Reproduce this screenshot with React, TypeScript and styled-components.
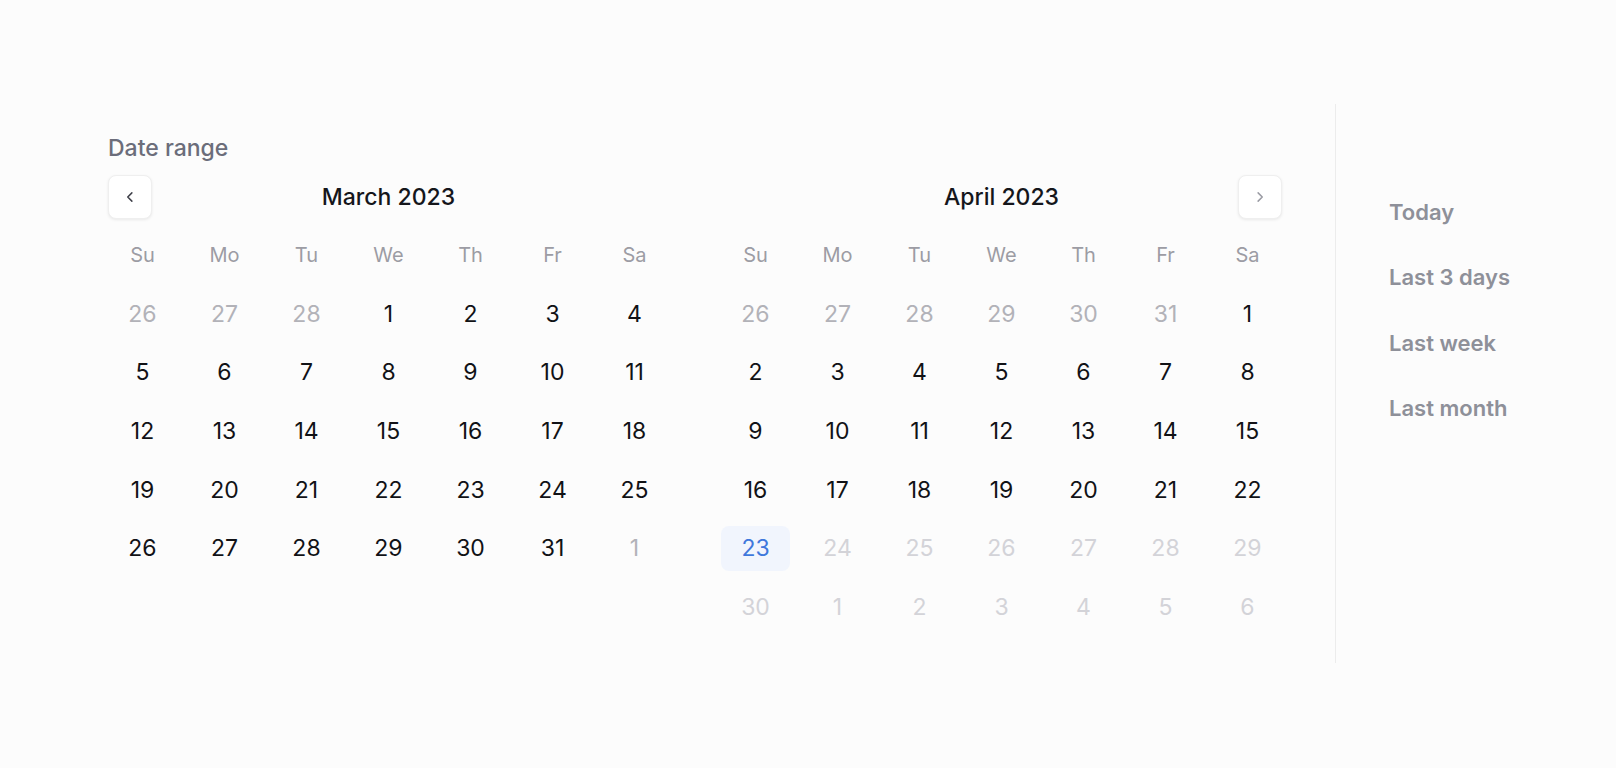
import React from "react";
import styled, { createGlobalStyle } from "styled-components";

const GlobalStyle = createGlobalStyle`
  html, body {
    margin: 0;
    padding: 0;
    background: #fcfcfc;
  }
  body {
    font-family: Inter, "Noto Sans", "Liberation Sans", sans-serif;
    -webkit-font-smoothing: antialiased;
  }
`;

const Page = styled.div`
  min-height: 100vh;
  box-sizing: border-box;
  padding: 104px 0 0 108px;
  background: #fcfcfc;
`;

const Picker = styled.div`
  display: flex;
  height: 559px;
`;

const RangeSection = styled.section`
  display: flex;
  flex-direction: column;
  padding-top: 28px;
`;

const Label = styled.div`
  font-size: 23px;
  line-height: 32px;
  font-weight: 500;
  color: #6b6d7a;
`;

const Months = styled.div`
  display: flex;
  gap: 52px;
  margin-top: 11px;
`;

const Month = styled.div`
  width: 561px;
  display: flex;
  flex-direction: column;
`;

const MonthHeader = styled.div`
  display: grid;
  grid-template-columns: 44px 1fr 44px;
  align-items: center;
  height: 44px;
`;

const MonthTitle = styled.div`
  text-align: center;
  font-size: 23px;
  line-height: 32px;
  font-weight: 500;
  color: #15161b;
`;

const NavButton = styled.button<{ $muted?: boolean }>`
  width: 44px;
  height: 44px;
  box-sizing: border-box;
  display: flex;
  align-items: center;
  justify-content: center;
  padding: 0;
  border: 1px solid #efefef;
  border-radius: 8px;
  background: #ffffff;
  box-shadow: 0 1px 3px rgba(0, 0, 0, 0.08);
  color: ${(p) => (p.$muted ? "#9a9ba3" : "#3f4049")};
  cursor: pointer;
`;

const Grid = styled.div`
  display: grid;
  grid-template-columns: repeat(7, 69px);
  grid-auto-rows: 45px;
  column-gap: 13px;
  row-gap: 13.7px;
  margin-top: 13.5px;
`;

const Weekday = styled.div`
  display: flex;
  align-items: center;
  justify-content: center;
  font-size: 20px;
  font-weight: 400;
  color: #9c9ca4;
`;

type DayKind = "current" | "outside" | "disabled" | "today";

const dayColors: Record<DayKind, string> = {
  current: "#111216",
  outside: "#b2b2b8",
  disabled: "#d3d3d8",
  today: "#3f78dc",
};

const Day = styled.div<{ $kind: DayKind }>`
  display: flex;
  align-items: center;
  justify-content: center;
  font-size: 23px;
  font-weight: 400;
  border-radius: 8px;
  color: ${(p) => dayColors[p.$kind]};
  background: ${(p) => (p.$kind === "today" ? "#f1f5fd" : "transparent")};
`;

const Divider = styled.div`
  width: 1px;
  margin: 0 53px;
  background: #ececec;
`;

const Presets = styled.nav`
  display: flex;
  flex-direction: column;
  gap: 33.3px;
  padding-top: 92px;
`;

const Preset = styled.button`
  display: block;
  padding: 0;
  border: none;
  background: none;
  text-align: left;
  font-family: inherit;
  font-size: 22px;
  line-height: 32px;
  font-weight: 600;
  color: #8e9099;
  cursor: pointer;
  white-space: nowrap;
`;

const Chevron = ({ dir }: { dir: "left" | "right" }) => (
  <svg width="18" height="18" viewBox="0 0 24 24" fill="none" stroke="currentColor" strokeWidth="2" strokeLinecap="round" strokeLinejoin="round">
    <path d={dir === "left" ? "M14.5 17.5 9 12l5.5-5.5" : "M9.5 17.5 15 12 9.5 6.5"} />
  </svg>
);

const WEEKDAYS = ["Su", "Mo", "Tu", "We", "Th", "Fr", "Sa"];

type Cell = { n: number; kind: DayKind };

const range = (from: number, to: number, kind: DayKind): Cell[] =>
  Array.from({ length: to - from + 1 }, (_, i) => ({ n: from + i, kind }));

const march: Cell[] = [
  ...range(26, 28, "outside"),
  ...range(1, 31, "current"),
  ...range(1, 1, "outside"),
];

const april: Cell[] = [
  ...range(26, 31, "outside"),
  ...range(1, 22, "current"),
  { n: 23, kind: "today" },
  ...range(24, 30, "disabled"),
  ...range(1, 6, "disabled"),
];

const MonthView = ({
  title,
  days,
  prev,
  next,
}: {
  title: string;
  days: Cell[];
  prev?: boolean;
  next?: boolean;
}) => (
  <Month>
    <MonthHeader>
      {prev ? (
        <NavButton aria-label="Previous month">
          <Chevron dir="left" />
        </NavButton>
      ) : (
        <span />
      )}
      <MonthTitle>{title}</MonthTitle>
      {next ? (
        <NavButton $muted aria-label="Next month">
          <Chevron dir="right" />
        </NavButton>
      ) : (
        <span />
      )}
    </MonthHeader>
    <Grid>
      {WEEKDAYS.map((d) => (
        <Weekday key={d}>{d}</Weekday>
      ))}
      {days.map((d, i) => (
        <Day key={i} $kind={d.kind}>
          {d.n}
        </Day>
      ))}
    </Grid>
  </Month>
);

export default function App() {
  return (
    <>
      <GlobalStyle />
      <Page>
        <Picker>
          <RangeSection>
            <Label>Date range</Label>
            <Months>
              <MonthView title="March 2023" days={march} prev />
              <MonthView title="April 2023" days={april} next />
            </Months>
          </RangeSection>
          <Divider />
          <Presets>
            <Preset>Today</Preset>
            <Preset>Last 3 days</Preset>
            <Preset>Last week</Preset>
            <Preset>Last month</Preset>
          </Presets>
        </Picker>
      </Page>
    </>
  );
}
